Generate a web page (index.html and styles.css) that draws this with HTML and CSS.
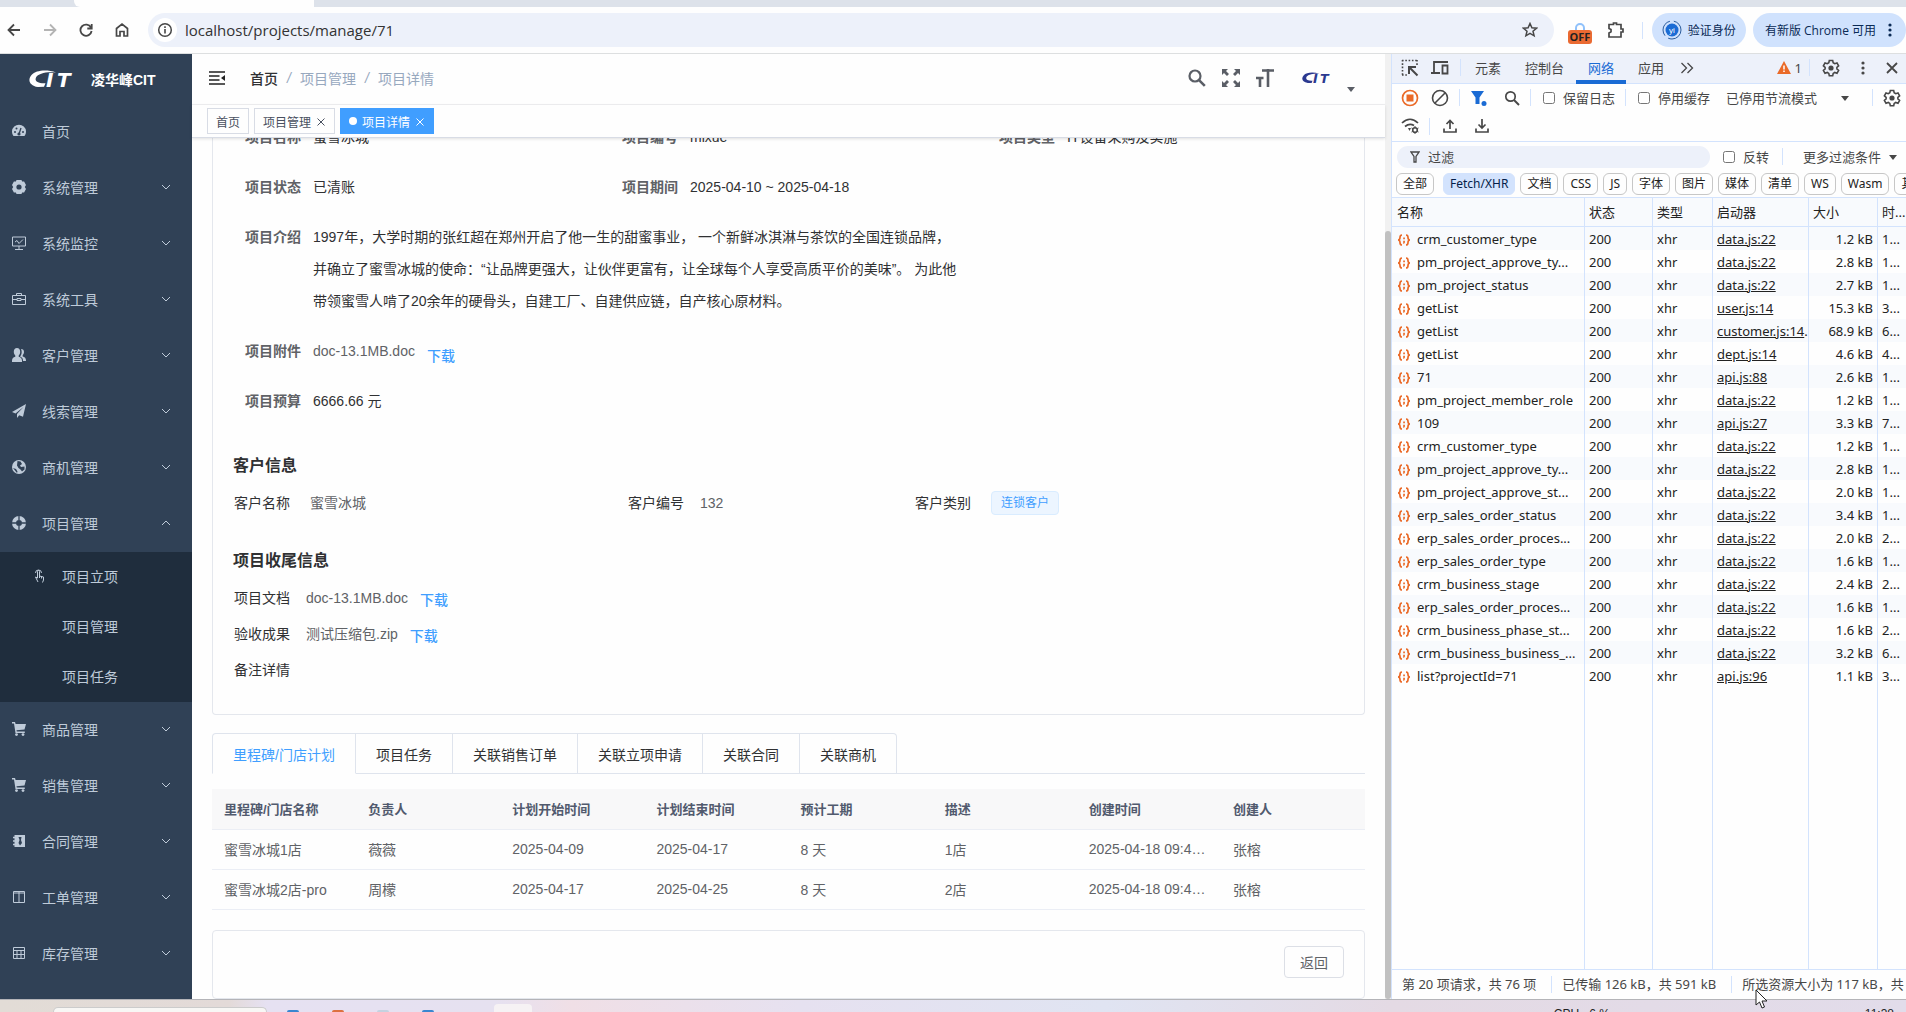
FILE: index.html
```html
<!DOCTYPE html>
<html lang="zh-CN">
<head>
    <meta charset="UTF-8">
    <meta name="viewport" content="width=device-width, initial-scale=1.0">
    <title>项目详情</title>
    <link rel="stylesheet" href="styles.css">
</head>
<body>
    <!-- 图标 -->
    <svg class="sprite" aria-hidden="true">
        <symbol id="i-down" viewBox="0 0 12 12"><path d="M2 4l4 4 4-4" fill="none" stroke="currentColor"/></symbol>
        <symbol id="i-up" viewBox="0 0 12 12"><path d="M2 8l4-4 4 4" fill="none" stroke="currentColor"/></symbol>
        <symbol id="i-close" viewBox="0 0 10 10"><path d="M1.500 1.500l7 7M8.500 1.500l-7 7" fill="none" stroke="currentColor"/></symbol>
        <symbol id="i-caret" viewBox="0 0 10 6"><path d="M1 1h8L5 6z" fill="currentColor"/></symbol>
        <symbol id="i-dots" viewBox="0 0 16 16"><g fill="currentColor"><circle cx="8" cy="3" r="1.600"/><circle cx="8" cy="8" r="1.600"/><circle cx="8" cy="13" r="1.600"/></g></symbol>
        <symbol id="i-gear" viewBox="0 0 18 18"><path d="M7.300 1.500h3.400l.5 2.300 1.500.9 2.300-.8 1.600 2.900-1.700 1.500v1.600l1.700 1.500-1.600 2.900-2.300-.8-1.500.9-.5 2.300H7.300l-.5-2.300-1.500-.9-2.300.8-1.600-2.900 1.700-1.500V8.300L1.400 6.800 3 3.900l2.300.8 1.500-.9z" fill="none" stroke="currentColor" stroke-width="1.600"/><circle cx="9" cy="9" r="2.600" fill="currentColor"/></symbol>
        <symbol id="i-search" viewBox="0 0 18 18"><circle cx="7" cy="7" r="5.500" fill="none" stroke="currentColor" stroke-width="2.200"/><path d="M10.800 10.800l6 6" stroke="currentColor" stroke-width="2.600"/></symbol>
        <symbol id="i-cart" viewBox="0 0 14 14"><path d="M0 0h3l.6 2H14l-1.500 5.500-8 .8.300 1.200h8V11H3.500L2 1.500H0z" fill="currentColor"/><circle cx="4.500" cy="12.600" r="1.400" fill="currentColor"/><circle cx="11" cy="12.600" r="1.400" fill="currentColor"/></symbol>
        <symbol id="i-json" viewBox="0 0 14 14"><path d="M5 2C3.200 2 3 3 3 4.500S2.500 7 1 7c1.500 0 2 1 2 2.500S3.200 12 5 12M9 2c1.800 0 2 1 2 2.500S11.500 7 13 7c-1.500 0-2 1-2 2.500S10.800 12 9 12" fill="none" stroke="#ea6a28" stroke-width="1.700"/><path d="M6.200 4.500h1.700v1.700H6.200zM6.200 7.800h1.700v1.700l-.8 1.300h-.9z" fill="#ea6a28"/></symbol>
        <symbol id="i-logo" viewBox="0 0 50 18"><path d="M27 2.500C18-.8 7 0 2.500 5-1.500 9.500 0 15.500 9 17l6-.2 1.500-3.600C8 13.500 5.500 11 7 7.500 9 3.500 17 1.500 27 2.500z" fill="currentColor"/><text x="17" y="17" font-family="DejaVu Sans" font-size="20" font-weight="bold" font-style="italic" fill="currentColor">I</text><text x="28" y="17" font-family="DejaVu Sans" font-size="20" font-weight="bold" font-style="italic" fill="currentColor">T</text></symbol>
    </svg>

    <!-- 浏览器 -->
    <div class="tabstrip"><div class="tabstrip-active"></div></div>
    <div class="toolbar">
        <button class="icon-btn" aria-label="后退"><svg width="14" height="14" viewBox="0 0 14 14"><path d="M13 7H2M7 1.500L1.500 7 7 12.500" fill="none" stroke="#474747" stroke-width="1.800"/></svg></button>
        <button class="icon-btn" aria-label="前进"><svg width="14" height="14" viewBox="0 0 14 14"><path d="M1 7h11M7 1.500L12.500 7 7 12.500" fill="none" stroke="#b4b4b4" stroke-width="1.800"/></svg></button>
        <button class="icon-btn" aria-label="刷新"><svg width="14" height="14" viewBox="0 0 14 14"><path d="M12 4.500A5.600 5.600 0 1 0 12.600 8M12.700 1v4.500H8.300" fill="none" stroke="#474747" stroke-width="1.800"/></svg></button>
        <button class="icon-btn" aria-label="主页"><svg width="14" height="14" viewBox="0 0 14 14"><path d="M1.500 13V5.500L7 1.200l5.500 4.300V13H9V8.500H5V13z" fill="none" stroke="#474747" stroke-width="1.700"/></svg></button>
        <div class="omnibox">
            <span class="site-info"><svg width="16" height="16" viewBox="0 0 16 16"><circle cx="8" cy="8" r="6.300" fill="none" stroke="#474747" stroke-width="1.500"/><path d="M8 7v4.500M8 4.300v1.700" stroke="#474747" stroke-width="1.600"/></svg></span>
            <input type="text" class="url" value="localhost/projects/manage/71" aria-label="地址">
            <svg width="16" height="16" viewBox="0 0 16 16"><path d="M8 1.500l1.900 4.300 4.700.4-3.600 3 1.100 4.600L8 11.400l-4.100 2.400L5 9.200l-3.600-3 4.700-.4z" fill="none" stroke="#474747" stroke-width="1.500"/></svg>
        </div>
        <div class="extensions">
            <span class="ext-off"><svg width="12" height="8" viewBox="0 0 12 8"><path d="M2 8V6a4 4 0 0 1 8 0v2" fill="none" stroke="#8fc1fb" stroke-width="2"/></svg><b>OFF</b></span>
            <svg width="18" height="18" viewBox="0 0 18 18"><path d="M2 3.500h4.500V2h3v1.500H14V8h2v3h-2v5H2v-4l2-1.200V8.500L2 7.500z" fill="none" stroke="#474747" stroke-width="1.700"/></svg>
        </div>
        <span class="bar-line"></span>
        <button class="pill"><svg width="20" height="20" viewBox="0 0 20 20"><circle cx="10" cy="10" r="9" fill="none" stroke="#2a5c9c" stroke-dasharray="18 4"/><circle cx="10" cy="10" r="6.500" fill="#1a6bd4"/><text x="10" y="13" text-anchor="middle" font-family="Liberation Sans" font-size="8" fill="#fff">yi</text></svg>验证身份</button>
        <button class="pill pill-update">有新版 Chrome 可用<svg width="16" height="16"><use href="#i-dots"/></svg></button>
    </div>

    <div class="window">
        <!-- 侧边栏 -->
        <nav class="sidebar">
            <a class="brand" href="#"><svg width="50" height="18"><use href="#i-logo"/></svg><span>凌华峰CIT</span></a>
            <a class="menu-item" href="#"><svg width="14" height="14" viewBox="0 0 14 14"><path d="M1.500 12A7 7 0 1 1 12.500 12z" fill="#bfcbd9"/><path d="M7 10l2-6" stroke="#304156" stroke-width="1.300"/><circle cx="7" cy="10" r="1.600" fill="#304156"/><circle cx="3" cy="8" r="1" fill="#304156"/><circle cx="4.500" cy="4.500" r="1" fill="#304156"/><circle cx="11" cy="8" r="1" fill="#304156"/></svg><span>首页</span></a>
            <a class="menu-item" href="#"><svg width="14" height="14" viewBox="0 0 14 14"><path d="M4.500 0h5l.6 1.600 2-.2L14 5l-1.200 2L14 9l-1.900 3.600-2-.2L9.500 14h-5l-.6-1.600-2 .2L0 9l1.200-2L0 5l1.900-3.600 2 .2z" fill="#bfcbd9"/><circle cx="7" cy="7" r="2.600" fill="#304156"/></svg><span>系统管理</span><svg class="arrow"><use href="#i-down"/></svg></a>
            <a class="menu-item" href="#"><svg width="14" height="14" viewBox="0 0 14 14"><path d="M.5 1h13v9H.5zM7 10v3M3 13.500h8M3 6l2-1.500L7 7.500l4-4" fill="none" stroke="#bfcbd9"/></svg><span>系统监控</span><svg class="arrow"><use href="#i-down"/></svg></a>
            <a class="menu-item" href="#"><svg width="14" height="14" viewBox="0 0 14 14"><path d="M.5 3.500h13v9H.5zM4.500 3.500v-2h5v2M.5 7.500H5M9 7.500h4.500M5 6.500h4v2H5z" fill="none" stroke="#bfcbd9"/></svg><span>系统工具</span><svg class="arrow"><use href="#i-down"/></svg></a>
            <a class="menu-item" href="#"><svg width="14" height="14" viewBox="0 0 14 14"><path d="M5 0c2 0 3.200 1.500 3.200 3.700 0 1.600-.7 3-1.500 3.800v1.200c2 .8 3.300 1.500 3.300 4V14H0v-1.300c0-2.500 1.300-3.200 3.300-4V7.500C2.500 6.700 1.800 5.300 1.800 3.700 1.800 1.500 3 0 5 0z" fill="#bfcbd9"/><path d="M9 1c2 0 3 1.200 3 3.100 0 1.400-.6 2.500-1.300 3.200v1.200c2 .7 3.300 1.500 3.300 4v.5h-3c0-2.500-1-3.800-3-4.500 1.300-1.500 2.500-4 1-7.500z" fill="#bfcbd9"/></svg><span>客户管理</span><svg class="arrow"><use href="#i-down"/></svg></a>
            <a class="menu-item" href="#"><svg width="14" height="14" viewBox="0 0 14 14"><path d="M14 0L0 8l3.500 1.500L11.500 3 5 10v4l2.200-2.800 3.800 1.600z" fill="#bfcbd9"/></svg><span>线索管理</span><svg class="arrow"><use href="#i-down"/></svg></a>
            <a class="menu-item" href="#"><svg width="14" height="14" viewBox="0 0 14 14"><circle cx="7" cy="7" r="7" fill="#bfcbd9"/><path d="M5.500 1l3 .5L10 4 8 5.500 9 7l3.500-.5v3L10 11.500l-1.500-2L6.500 8 5 5.500zM1 8l3 1 1.500 2.500L5 13z" fill="#304156"/></svg><span>商机管理</span><svg class="arrow"><use href="#i-down"/></svg></a>
            <a class="menu-item" href="#"><svg width="14" height="14" viewBox="0 0 14 14"><circle cx="7" cy="7" r="5" fill="none" stroke="#bfcbd9" stroke-width="4"/><path d="M7 0v4M7 10v4M0 7h4M10 7h4" stroke="#304156" stroke-width="1.300"/></svg><span>项目管理</span><svg class="arrow"><use href="#i-up"/></svg></a>
            <div class="submenu">
                <a class="submenu-item" href="#"><svg width="10" height="14" viewBox="0 0 10 14"><path d="M3.500 9V2.500a1 1 0 0 1 2 0V7l4 1v3l-1 2.500M3.500 9L1.500 8l2.500 5M1.500 4a3 3 0 1 1 6 0M5.500 7v2M7.500 7.500v2" fill="none" stroke="#bfcbd9"/></svg><span>项目立项</span></a>
                <a class="submenu-item" href="#"><i></i><span>项目管理</span></a>
                <a class="submenu-item" href="#"><i></i><span>项目任务</span></a>
            </div>
            <a class="menu-item" href="#"><svg width="14" height="14"><use href="#i-cart"/></svg><span>商品管理</span><svg class="arrow"><use href="#i-down"/></svg></a>
            <a class="menu-item" href="#"><svg width="14" height="14"><use href="#i-cart"/></svg><span>销售管理</span><svg class="arrow"><use href="#i-down"/></svg></a>
            <a class="menu-item" href="#"><svg width="14" height="14" viewBox="0 0 14 14"><path d="M2.500 1H13v12H2.500z" fill="#bfcbd9"/><path d="M1 3.500h3M1 7h3M1 10.500h3" stroke="#bfcbd9" stroke-width="1.500"/><path d="M6.500 3h3L9 6l1 3-2 2.500L6.500 9l1-3z" fill="#304156"/></svg><span>合同管理</span><svg class="arrow"><use href="#i-down"/></svg></a>
            <a class="menu-item" href="#"><svg width="14" height="14" viewBox="0 0 14 14"><path d="M1.500 1.500h11v11h-11zM7 1.500v11M1.500 3h11" fill="none" stroke="#bfcbd9"/></svg><span>工单管理</span><svg class="arrow"><use href="#i-down"/></svg></a>
            <a class="menu-item" href="#"><svg width="14" height="14" viewBox="0 0 14 14"><path d="M1.500 1.500h11v11h-11zM1.500 4.500h11M1.500 8.500h11M5 4.500v8M9 4.500v8" fill="none" stroke="#bfcbd9"/></svg><span>库存管理</span><svg class="arrow"><use href="#i-down"/></svg></a>
        </nav>

        <!-- 主区域 -->
        <main class="main">
            <header class="navbar">
                <button class="icon-btn" aria-label="折叠菜单"><svg width="16" height="14" viewBox="0 0 16 14"><path d="M0 1h16M0 5h10.500M0 9h10.500M0 13h16" stroke="#222" stroke-width="1.600"/><path d="M16 4v6l-4-3z" fill="#222"/></svg></button>
                <div class="breadcrumb"><a href="#">首页</a><i>/</i><span>项目管理</span><i>/</i><span>项目详情</span></div>
                <div class="nav-right">
                    <button class="icon-btn" aria-label="搜索"><svg width="18" height="18"><use href="#i-search"/></svg></button>
                    <button class="icon-btn" aria-label="全屏"><svg width="18" height="18" viewBox="0 0 18 18"><path d="M0 0h6L4 2l3 3-2 2-3-3-2 2zM18 0v6l-2-2-3 3-2-2 3-3-2-2zM0 18v-6l2 2 3-3 2 2-3 3 2 2zM18 18h-6l2-2-3-3 2-2 3 3 2-2z" fill="#5a5e66"/></svg></button>
                    <button class="icon-btn" aria-label="字号"><svg width="18" height="18" viewBox="0 0 18 18"><path d="M6 1.500h12M12 0v18M0 9h7.500M4 8v10" fill="none" stroke="#5a5e66" stroke-width="2.600"/></svg></button>
                    <a class="avatar" href="#"><svg width="32" height="14"><use href="#i-logo"/></svg><svg class="avatar-caret" width="10" height="6"><use href="#i-caret"/></svg></a>
                </div>
            </header>
            <div class="tags">
                <a class="tag-view" href="#">首页</a>
                <a class="tag-view" href="#">项目管理<svg width="10" height="10"><use href="#i-close"/></svg></a>
                <a class="tag-view active" href="#">项目详情<svg width="10" height="10"><use href="#i-close"/></svg></a>
            </div>
            <div class="page">
                <section class="card detail">
                    <div class="form-row">
                        <div class="form-item"><label>项目名称</label><span>蜜雪冰城</span></div>
                        <div class="form-item"><label>项目编号</label><span>mixue</span></div>
                        <div class="form-item"><label>项目类型</label><span>IT设备采购及实施</span></div>
                    </div>
                    <div class="form-row">
                        <div class="form-item"><label>项目状态</label><span>已清账</span></div>
                        <div class="form-item"><label>项目期间</label><span>2025-04-10 ~ 2025-04-18</span></div>
                    </div>
                    <div class="form-item intro"><label>项目介绍</label><p>1997年，大学时期的张红超在郑州开启了他一生的甜蜜事业， 一个新鲜冰淇淋与茶饮的全国连锁品牌，<br>并确立了蜜雪冰城的使命：“让品牌更强大，让伙伴更富有，让全球每个人享受高质平价的美味”。 为此他<br>带领蜜雪人啃了20余年的硬骨头，自建工厂、自建供应链，自产核心原材料。</p></div>
                    <div class="form-item"><label>项目附件</label><span class="muted">doc-13.1MB.doc</span><a class="download low" href="#">下载</a></div>
                    <div class="form-item"><label>项目预算</label><span>6666.66 元</span></div>

                    <h3>客户信息</h3>
                    <div class="customer">
                        <div class="info"><span>客户名称</span><em class="wide">蜜雪冰城</em></div>
                        <div class="info"><span>客户编号</span><em>132</em></div>
                        <div class="info"><span>客户类别</span><em class="wide badge">连锁客户</em></div>
                    </div>
                    <h3>项目收尾信息</h3>
                    <div class="info"><span>项目文档</span><em>doc-13.1MB.doc</em><a class="download" href="#">下载</a></div>
                    <div class="info"><span>验收成果</span><em>测试压缩包.zip</em><a class="download" href="#">下载</a></div>
                    <div class="info"><span>备注详情</span></div>
                </section>

                <div class="tabs">
                    <button class="tab active">里程碑/门店计划</button>
                    <button class="tab">项目任务</button>
                    <button class="tab">关联销售订单</button>
                    <button class="tab">关联立项申请</button>
                    <button class="tab">关联合同</button>
                    <button class="tab">关联商机</button>
                </div>
                <table class="plan">
                    <thead>
                        <tr><th>里程碑/门店名称</th><th>负责人</th><th>计划开始时间</th><th>计划结束时间</th><th>预计工期</th><th>描述</th><th>创建时间</th><th>创建人</th></tr>
                    </thead>
                    <tbody>
                        <tr><td>蜜雪冰城1店</td><td>薇薇</td><td>2025-04-09</td><td>2025-04-17</td><td>8 天</td><td>1店</td><td>2025-04-18 09:4…</td><td>张榕</td></tr>
                        <tr><td>蜜雪冰城2店-pro</td><td>周檬</td><td>2025-04-17</td><td>2025-04-25</td><td>8 天</td><td>2店</td><td>2025-04-18 09:4…</td><td>张榕</td></tr>
                    </tbody>
                </table>
                <section class="card actions"><button class="back">返回</button></section>
            </div>
        </main>
        <div class="scrollbar"><div class="thumb"></div></div>

        <!-- 开发者工具 -->
        <aside class="devtools">
            <div class="dt-tabs">
                <svg class="dt-icon" width="18" height="18" viewBox="0 0 18 18"><path d="M1 1.500h15M1.500 1v15M16 1v5M1 16h5" fill="none" stroke="#474747" stroke-width="1.600" stroke-dasharray="1.600 1.700"/><path d="M8 15V8h7M8.500 8.500l8 8" fill="none" stroke="#474747" stroke-width="2"/></svg>
                <svg class="dt-icon" width="18" height="18" viewBox="0 0 18 18"><path d="M3 14V3h14M0 14h9" fill="none" stroke="#474747" stroke-width="1.800"/><path d="M11.500 6.500h5v8h-5z" fill="none" stroke="#474747" stroke-width="1.800"/></svg>
                <span class="bar-line"></span>
                <button class="dt-tab">元素</button>
                <button class="dt-tab">控制台</button>
                <button class="dt-tab active">网络</button>
                <button class="dt-tab">应用</button>
                <svg class="more" width="14" height="12" viewBox="0 0 14 12"><path d="M1.500 1l5 5-5 5M7.500 1l5 5-5 5" fill="none" stroke="#474747" stroke-width="1.300"/></svg>
                <span class="warn"><svg width="14" height="13" viewBox="0 0 14 13"><path d="M7 0l7 13H0z" fill="#ea6a28"/><path d="M7 4.500v4M7 9.500V11" stroke="#fff" stroke-width="1.500"/></svg>1</span>
                <span class="bar-line"></span>
                <button class="icon-btn" aria-label="设置"><svg width="18" height="18"><use href="#i-gear"/></svg></button>
                <button class="icon-btn" aria-label="更多"><svg width="16" height="16"><use href="#i-dots"/></svg></button>
                <button class="icon-btn" aria-label="关闭"><svg width="12" height="12" viewBox="0 0 12 12"><path d="M1 1l10 10M11 1L1 11" stroke="#474747" stroke-width="1.800"/></svg></button>
            </div>
            <div class="dt-row dt-controls">
                <button class="icon-btn" aria-label="停止录制"><svg width="18" height="18" viewBox="0 0 18 18"><circle cx="9" cy="9" r="7.500" fill="none" stroke="#ea6a28" stroke-width="1.700"/><path d="M5.500 5.500h7v7h-7z" fill="#ea6a28"/></svg></button>
                <button class="icon-btn" aria-label="清除"><svg width="18" height="18" viewBox="0 0 18 18"><circle cx="9" cy="9" r="7.500" fill="none" stroke="#474747" stroke-width="1.600"/><path d="M14 4L4 14" stroke="#474747" stroke-width="1.600"/></svg></button>
                <span class="bar-line"></span>
                <button class="icon-btn" aria-label="过滤"><svg width="18" height="18" viewBox="0 0 18 18"><path d="M1 2h13L9.500 8.500V15h-4V8.500z" fill="#1a6bd4"/><circle cx="14" cy="14.500" r="2.500" fill="#1a6bd4"/></svg></button>
                <button class="icon-btn" aria-label="搜索"><svg width="16" height="16" viewBox="0 0 16 16"><circle cx="6.500" cy="6.500" r="4.700" fill="none" stroke="#474747" stroke-width="1.700"/><path d="M10 10l5 5" stroke="#474747" stroke-width="2"/></svg></button>
                <span class="bar-line"></span>
                <label><input type="checkbox">保留日志</label>
                <span class="bar-line"></span>
                <label><input type="checkbox">停用缓存</label>
                <select aria-label="节流"><option>已停用节流模式</option></select>
                <svg class="select-caret" width="10" height="6"><use href="#i-caret"/></svg>
                <span class="bar-line"></span>
                <button class="icon-btn" aria-label="网络设置"><svg width="18" height="18"><use href="#i-gear"/></svg></button>
            </div>
            <div class="dt-row dt-io">
                <svg width="18" height="16" viewBox="0 0 18 16"><path d="M1 5c5-5 11-5 16 0M4 8.500c3-2.500 6-3 9-1" fill="none" stroke="#474747" stroke-width="1.700"/><path d="M7 10h3l-1.500 3z" fill="#474747"/><circle cx="14" cy="12" r="2.300" fill="none" stroke="#474747" stroke-width="1.600"/><path d="M14 8v1.500M14 14.500V16M10.500 10l1.300.8M16.200 13.200l1.300.8M10.500 14l1.300-.8M16.200 10.800l1.300-.8" stroke="#474747"/></svg>
                <span class="bar-line"></span>
                <svg width="14" height="14" viewBox="0 0 14 14"><path d="M7 10V1.500M3.500 5L7 1.500 10.500 5M1 9.500V13h12V9.500" fill="none" stroke="#474747" stroke-width="1.700"/></svg>
                <svg width="14" height="14" viewBox="0 0 14 14"><path d="M7 0v8.500M3.500 5.500L7 9l3.500-3.500M1 9.500V13h12V9.500" fill="none" stroke="#474747" stroke-width="1.700"/></svg>
            </div>
            <div class="dt-row dt-filter">
                <div class="filter-box"><svg width="10" height="12" viewBox="0 0 10 12"><path d="M1 1h8L6 5.500V11H4V5.500z" fill="none" stroke="#474747" stroke-width="1.300"/></svg><input type="text" placeholder="过滤" aria-label="过滤"></div>
                <label><input type="checkbox">反转</label>
                <span class="bar-line"></span>
                <button class="more-filters">更多过滤条件<svg width="10" height="6"><use href="#i-caret"/></svg></button>
            </div>
            <div class="chips">
                <button class="chip first">全部</button><button class="chip on">Fetch/XHR</button><button class="chip">文档</button><button class="chip">CSS</button><button class="chip">JS</button><button class="chip">字体</button><button class="chip">图片</button><button class="chip">媒体</button><button class="chip">清单</button><button class="chip">WS</button><button class="chip">Wasm</button><button class="chip">其他</button>
            </div>
            <div class="requests">
                <table>
                    <colgroup><col class="c-name"><col class="c-status"><col class="c-type"><col class="c-init"><col class="c-size"><col></colgroup>
                    <thead><tr><th>名称</th><th>状态</th><th>类型</th><th>启动器</th><th>大小</th><th>时...</th></tr></thead>
                    <tbody>
                        <tr><td><svg><use href="#i-json"/></svg>crm_customer_type</td><td>200</td><td>xhr</td><td><a href="#">data.js:22</a></td><td>1.2 kB</td><td>1...</td></tr>
                        <tr><td><svg><use href="#i-json"/></svg>pm_project_approve_ty...</td><td>200</td><td>xhr</td><td><a href="#">data.js:22</a></td><td>2.8 kB</td><td>1...</td></tr>
                        <tr><td><svg><use href="#i-json"/></svg>pm_project_status</td><td>200</td><td>xhr</td><td><a href="#">data.js:22</a></td><td>2.7 kB</td><td>1...</td></tr>
                        <tr><td><svg><use href="#i-json"/></svg>getList</td><td>200</td><td>xhr</td><td><a href="#">user.js:14</a></td><td>15.3 kB</td><td>3...</td></tr>
                        <tr><td><svg><use href="#i-json"/></svg>getList</td><td>200</td><td>xhr</td><td><a href="#">customer.js:14</a>.</td><td>68.9 kB</td><td>6...</td></tr>
                        <tr><td><svg><use href="#i-json"/></svg>getList</td><td>200</td><td>xhr</td><td><a href="#">dept.js:14</a></td><td>4.6 kB</td><td>4...</td></tr>
                        <tr><td><svg><use href="#i-json"/></svg>71</td><td>200</td><td>xhr</td><td><a href="#">api.js:88</a></td><td>2.6 kB</td><td>1...</td></tr>
                        <tr><td><svg><use href="#i-json"/></svg>pm_project_member_role</td><td>200</td><td>xhr</td><td><a href="#">data.js:22</a></td><td>1.2 kB</td><td>1...</td></tr>
                        <tr><td><svg><use href="#i-json"/></svg>109</td><td>200</td><td>xhr</td><td><a href="#">api.js:27</a></td><td>3.3 kB</td><td>7...</td></tr>
                        <tr><td><svg><use href="#i-json"/></svg>crm_customer_type</td><td>200</td><td>xhr</td><td><a href="#">data.js:22</a></td><td>1.2 kB</td><td>1...</td></tr>
                        <tr><td><svg><use href="#i-json"/></svg>pm_project_approve_ty...</td><td>200</td><td>xhr</td><td><a href="#">data.js:22</a></td><td>2.8 kB</td><td>1...</td></tr>
                        <tr><td><svg><use href="#i-json"/></svg>pm_project_approve_st...</td><td>200</td><td>xhr</td><td><a href="#">data.js:22</a></td><td>2.0 kB</td><td>1...</td></tr>
                        <tr><td><svg><use href="#i-json"/></svg>erp_sales_order_status</td><td>200</td><td>xhr</td><td><a href="#">data.js:22</a></td><td>3.4 kB</td><td>1...</td></tr>
                        <tr><td><svg><use href="#i-json"/></svg>erp_sales_order_proces...</td><td>200</td><td>xhr</td><td><a href="#">data.js:22</a></td><td>2.0 kB</td><td>2...</td></tr>
                        <tr><td><svg><use href="#i-json"/></svg>erp_sales_order_type</td><td>200</td><td>xhr</td><td><a href="#">data.js:22</a></td><td>1.6 kB</td><td>1...</td></tr>
                        <tr><td><svg><use href="#i-json"/></svg>crm_business_stage</td><td>200</td><td>xhr</td><td><a href="#">data.js:22</a></td><td>2.4 kB</td><td>2...</td></tr>
                        <tr><td><svg><use href="#i-json"/></svg>erp_sales_order_proces...</td><td>200</td><td>xhr</td><td><a href="#">data.js:22</a></td><td>1.6 kB</td><td>1...</td></tr>
                        <tr><td><svg><use href="#i-json"/></svg>crm_business_phase_st...</td><td>200</td><td>xhr</td><td><a href="#">data.js:22</a></td><td>1.6 kB</td><td>2...</td></tr>
                        <tr><td><svg><use href="#i-json"/></svg>crm_business_business_...</td><td>200</td><td>xhr</td><td><a href="#">data.js:22</a></td><td>3.2 kB</td><td>6...</td></tr>
                        <tr><td><svg><use href="#i-json"/></svg>list?projectId=71</td><td>200</td><td>xhr</td><td><a href="#">api.js:96</a></td><td>1.1 kB</td><td>3...</td></tr>
                        <tr class="filler"><td></td><td></td><td></td><td></td><td></td><td></td></tr>
                    </tbody>
                </table>
            </div>
            <div class="summary"><span>第 20 项请求，共 76 项</span><span>已传输 126 kB，共 591 kB</span><span>所选资源大小为 117 kB，共</span></div>
        </aside>
    </div>

    <!-- 任务栏 -->
    <footer class="taskbar">
        <div class="task-search"></div>
        <i class="app blue"></i><i class="app orange"></i><i class="app grey"></i><i class="app blue"></i>
        <div class="task-active"></div>
        <span class="cpu">CPU&nbsp;&nbsp; 6 %</span>
        <span class="clock">11:38</span>
    </footer>
    <svg class="cursor" width="13" height="20" viewBox="0 0 13 20"><path d="M1 1v15l3.500-3 2.500 6 2.500-1-2.500-6H12z" fill="#fff" stroke="#222"/></svg>
</body>
</html>
```

FILE: styles.css
```css
* {
    box-sizing: border-box;
}
body {
    margin: 0;
    height: 100vh;
    display: flex;
    flex-direction: column;
    overflow: hidden;
    position: relative;
    background-color: #fefefe;
    font-family: "Liberation Sans", "Noto Sans CJK SC", sans-serif;
    font-size: 14px;
    color: #303133;
}
a {
    color: inherit;
    text-decoration: none;
}
button, input, select {
    font: inherit;
    color: inherit;
}
button {
    border: none;
    background: none;
    padding: 0;
    cursor: pointer;
}
svg {
    flex: none;
}
.sprite {
    position: absolute;
    width: 0;
    height: 0;
}
.icon-btn {
    display: flex;
}
.bar-line {
    flex: none;
    width: 1px;
    height: 17px;
    background-color: #d3e3fd;
}

/* browser */
.tabstrip {
    flex: none;
    height: 7px;
    padding-left: 74px;
    background-color: #dde2ea;
}
.tabstrip-active {
    width: 240px;
    height: 7px;
    background-color: #fefefe;
    border-radius: 0 0 0 6px;
}
.toolbar {
    flex: none;
    display: flex;
    align-items: center;
    height: 47px;
    padding-left: 7px;
    gap: 22px;
    border-bottom: 1px solid #dddfe0;
    font-family: "Open Sans", "Noto Sans CJK SC", sans-serif;
}
.omnibox {
    flex: 1;
    display: flex;
    align-items: center;
    gap: 8px;
    height: 34px;
    margin-left: -3px;
    padding: 0 16px 0 5px;
    border-radius: 17px;
    background-color: #edf1fa;
}
.site-info {
    display: flex;
    padding: 4px;
    border-radius: 12px;
    background-color: #fff;
}
.url {
    flex: 1;
    border: none;
    outline: none;
    padding: 0;
    background: none;
    font-size: 15px;
    color: #333;
}
.extensions {
    display: flex;
    align-items: center;
    gap: 15px;
    margin-left: -8px;
}
.ext-off {
    display: flex;
    flex-direction: column;
    align-items: center;
    padding-top: 6px;
}
.ext-off b {
    width: 24px;
    border-radius: 3px;
    background-color: #ea6a32;
    font-size: 11px;
    line-height: 14px;
    text-align: center;
    color: #222;
}
.toolbar > .bar-line {
    margin: 0 -13px 0 -5px;
}
.pill {
    display: flex;
    align-items: center;
    gap: 6px;
    height: 34px;
    padding: 0 10px;
    border-radius: 17px;
    background-color: #d0e2fd;
    font-size: 12px;
    color: #0a2a55;
}
.pill-update {
    margin-left: -15px;
    padding: 0 8px 0 12px;
    gap: 6px;
}

.window {
    flex: 1;
    display: flex;
    min-height: 0;
    border-bottom: 1px solid #b4b4b8;
}

/* sidebar */
.sidebar {
    flex: 0 0 192px;
    overflow: hidden;
    background-color: #304156;
    color: #bfcbd9;
}
.brand {
    display: flex;
    align-items: center;
    gap: 12px;
    height: 50px;
    padding-left: 29px;
    font-weight: bold;
    color: #fff;
}
.menu-item {
    display: flex;
    align-items: center;
    gap: 16px;
    height: 56px;
    padding: 0 20px 2px 12px;
}
.arrow {
    width: 12px;
    height: 12px;
    margin-left: auto;
}
.submenu {
    background-color: #1f2d3d;
}
.submenu-item {
    display: flex;
    align-items: center;
    gap: 18px;
    height: 50px;
    padding: 0 0 2px 34px;
}
.submenu-item i {
    width: 10px;
}

/* header */
.main {
    flex: 1;
    min-width: 0;
    display: flex;
    flex-direction: column;
}
.navbar {
    flex: none;
    display: flex;
    align-items: center;
    height: 51px;
    padding: 0 29px 2px 17px;
    border-bottom: 1px solid #f0f0f2;
}
.breadcrumb {
    display: flex;
    align-items: center;
    margin-left: 25px;
    color: #97a8be;
}
.breadcrumb a {
    color: #303133;
    font-weight: 500;
}
.breadcrumb i {
    width: 22px;
    text-align: center;
    color: #97a8be;
}
.nav-right {
    display: flex;
    align-items: center;
    gap: 16px;
    margin-left: auto;
    color: #5a5e66;
}
.avatar {
    display: flex;
    align-items: center;
    gap: 12px;
    margin-left: 12px;
    color: #2b3990;
}
.avatar-caret {
    margin-top: 22px;
    color: #5a5e66;
}
.tags {
    flex: none;
    position: relative;
    display: flex;
    gap: 5px;
    height: 33px;
    padding: 3px 15px;
    border-bottom: 1px solid #d8dce5;
    box-shadow: 0 1px 3px rgba(0, 0, 0, 0.12);
    background-color: #fefefe;
}
.tag-view {
    display: flex;
    align-items: center;
    gap: 5px;
    height: 26px;
    padding: 0 8px;
    border: 1px solid #d8dce5;
    font-size: 12px;
    color: #495060;
}
.tag-view svg {
    margin-top: 2px;
}
.tag-view.active {
    border-color: #409eff;
    background-color: #409eff;
    color: #fff;
}
.tag-view.active::before {
    content: "";
    width: 8px;
    height: 8px;
    border-radius: 50%;
    background-color: #fff;
}

/* page */
.page {
    flex: 1;
    min-height: 0;
    overflow: hidden;
    padding: 0 20px;
}
.card {
    border: 1px solid #e4e7ed;
    border-radius: 4px;
}
.detail {
    margin-top: -26px;
    padding: 0 20px 26px;
    border-top: none;
}
.form-row {
    display: grid;
    grid-template-columns: repeat(3, 1fr);
    gap: 20px;
    height: 50px;
}
.form-item {
    display: flex;
    height: 50px;
    line-height: 50px;
}
.form-item label {
    flex: none;
    width: 80px;
    padding-left: 12px;
    font-weight: bold;
    color: #606266;
}
.form-item.intro {
    height: 114px;
    line-height: 32px;
    padding-top: 9px;
}
.intro p {
    margin: 0;
    white-space: nowrap;
}
.muted {
    color: #606266;
}
.download {
    margin-left: 12px;
    padding-top: 2px;
    font-weight: 500;
    color: #409eff;
}
.download.low {
    padding-top: 5px;
}
h3 {
    margin: 28px 0 7px;
    font-size: 16px;
    line-height: 24px;
}
.customer {
    display: grid;
    grid-template-columns: 394fr 287fr 430fr;
    margin-bottom: 26px;
}
.info {
    display: flex;
    height: 36px;
    padding-left: 1px;
    line-height: 36px;
}
.info em {
    margin-left: 16px;
    font-style: normal;
    color: #606266;
}
.info em.wide {
    margin-left: 20px;
}
.info em.badge {
    align-self: center;
    height: 24px;
    padding: 0 9px;
    border: 1px solid #d9ecff;
    border-radius: 4px;
    background-color: #ecf5ff;
    font-size: 12px;
    line-height: 22px;
    color: #409eff;
}

.tabs {
    display: flex;
    margin-top: 18px;
    border-bottom: 1px solid #dfe4ed;
}
.tab {
    height: 41px;
    margin-bottom: -1px;
    padding: 0 20px;
    border: 1px solid #dfe4ed;
    border-left: none;
}
.tab:first-child {
    border-left: 1px solid #dfe4ed;
    border-radius: 4px 0 0 0;
}
.tab:last-child {
    border-radius: 0 4px 0 0;
}
.tab.active {
    border-bottom-color: #fefefe;
    color: #409eff;
}
.plan {
    width: 100%;
    margin-top: 15px;
    table-layout: fixed;
    border-collapse: collapse;
}
.plan th, .plan td {
    height: 40px;
    padding: 0 12px;
    border-bottom: 1px solid #ebeef5;
    text-align: left;
    white-space: nowrap;
    color: #606266;
}
.plan th {
    background-color: #f8f8f9;
    font-size: 13px;
    color: #515a6e;
}
.actions {
    display: flex;
    justify-content: flex-end;
    margin-top: 20px;
    padding: 15px 20px 20px;
}
.back {
    width: 60px;
    height: 32px;
    border: 1px solid #dcdfe6;
    border-radius: 4px;
    color: #606266;
}
.scrollbar {
    flex: 0 0 6px;
    padding-top: 177px;
    background-color: #f1f1f1;
}
.thumb {
    height: 100%;
    border-radius: 3px;
    background-color: #c1c1c1;
}

/* devtools */
.devtools {
    flex: 0 0 515px;
    min-width: 0;
    display: flex;
    flex-direction: column;
    overflow: hidden;
    border-left: 1px solid #d3e3fd;
    font-family: "Noto Sans", "Noto Sans CJK SC", sans-serif;
    font-size: 13px;
    color: #474747;
}
.dt-tabs {
    flex: none;
    display: flex;
    align-items: center;
    height: 30px;
    padding: 0 8px 2px 9px;
    border-bottom: 1px solid #d3e3fd;
    background-color: #edf1fa;
}
.dt-icon {
    margin-right: 12px;
}
.dt-tabs .bar-line {
    margin: 0 2px 0 -1px;
}
.dt-tab {
    height: 30px;
    margin-bottom: -2px;
    padding: 0 12px 2px;
    border-bottom: 4px solid transparent;
    border-top: 4px solid transparent;
}
.dt-tab.active {
    border-bottom-color: #1a6bd4;
    color: #1a6bd4;
}
.more {
    margin-left: 4px;
}
.warn {
    display: flex;
    align-items: center;
    gap: 4px;
    margin: 0 8px 0 auto;
}
.dt-tabs .icon-btn {
    margin-left: 10px;
}
.dt-tabs .icon-btn + .icon-btn {
    margin-left: 15px;
}
.dt-row {
    flex: none;
    display: flex;
    align-items: center;
    height: 29px;
    padding: 0 8px 2px 9px;
    white-space: nowrap;
}
.dt-row label {
    display: flex;
    align-items: center;
    gap: 8px;
}
.dt-row input[type="checkbox"] {
    width: 12px;
    height: 12px;
    margin: 0;
}
.dt-controls {
    gap: 10px;
    padding-right: 5px;
}
.dt-controls .icon-btn:nth-child(2) {
    margin-left: 2px;
}
.dt-controls .icon-btn:nth-child(5) {
    margin-left: 6px;
}
.dt-controls label {
    margin-left: 2px;
}
.dt-controls select {
    appearance: none;
    width: 104px;
    margin-left: 6px;
    padding: 0;
    border: none;
    background: none;
}
.dt-controls .select-caret {
    margin: 0 auto 0 0;
}
.dt-io {
    gap: 10px;
    border-bottom: 1px solid #d3e3fd;
}
.dt-io svg:nth-child(3) {
    margin: 0 8px 0 3px;
}
.dt-filter {
    padding: 0 8px 0 5px;
}
.filter-box {
    display: flex;
    align-items: center;
    gap: 8px;
    flex: 1;
    height: 22px;
    margin-right: 13px;
    padding: 0 13px;
    border-radius: 11px;
    background-color: #edf1fa;
}
.filter-box input {
    flex: 1;
    min-width: 0;
    border: none;
    outline: none;
    padding: 0;
    background: none;
}
.filter-box input::placeholder {
    color: #474747;
}
.dt-filter .bar-line {
    margin: 0 20px 0 13px;
}
.more-filters {
    display: flex;
    align-items: center;
    gap: 7px;
}
.chips {
    flex: none;
    display: flex;
    gap: 5px;
    height: 27px;
    padding: 2px 0 0 4px;
    border-bottom: 1px solid #d3e3fd;
}
.chip {
    flex: none;
    height: 22px;
    padding: 0 6px;
    border: 1px solid #c7c7c7;
    border-radius: 6px;
    font-size: 12px;
    line-height: 20px;
    color: #222;
}
.chip.first {
    margin-right: 4px;
}
.chip.on {
    border-color: #d3e3fd;
    background-color: #d3e3fd;
    color: #041e49;
}
.requests {
    flex: 1;
    min-height: 0;
    color: #222;
}
.requests table {
    width: 100%;
    height: 100%;
    table-layout: fixed;
    border-spacing: 0;
}
.c-name { width: 193px; }
.c-status { width: 68px; }
.c-type { width: 60px; }
.c-init { width: 96px; }
.c-size { width: 69px; }
.requests th, .requests td {
    height: 23px;
    padding: 0 4px;
    border-right: 1px solid #d3e3fd;
    line-height: 18px;
    text-align: left;
    font-weight: normal;
    white-space: nowrap;
}
.requests th {
    height: 29px;
    border-bottom: 1px solid #d3e3fd;
    background-color: #f8fafd;
}
.requests th:first-child, .requests td:first-child {
    padding-left: 5px;
}
.requests th:last-child, .requests td:last-child {
    border-right: none;
}
.requests tbody tr:nth-child(odd) {
    background-color: #f8fafd;
}
.requests td:nth-child(5) {
    text-align: right;
}
.requests td:nth-child(4) {
    padding-right: 0;
}
.requests td a {
    text-decoration: underline;
}
.requests svg {
    width: 14px;
    height: 14px;
    margin-right: 6px;
    vertical-align: -3px;
}
.requests tbody tr.filler {
    background-color: #fefefe;
}
.requests .filler td {
    height: auto;
}
.summary {
    flex: none;
    display: flex;
    align-items: center;
    height: 30px;
    border-top: 1px solid #d3e3fd;
    white-space: nowrap;
}
.summary span {
    padding: 0 15px 0 10px;
    line-height: 17px;
    border-left: 1px solid #d3e3fd;
}
.summary span:first-child {
    border-left: none;
}

/* taskbar */
.taskbar {
    flex: none;
    display: flex;
    align-items: flex-end;
    height: 12px;
    overflow: hidden;
    background-image: linear-gradient(90deg, #e2dcd6, #e3dad8 12%, #e6e1f2 14%, #e6e1f0 26%, #f0dfe6 30%, #e6e1f0 42%, #e0e4f2 58%, #e4dae4 73%, #e2dcea);
    font-size: 12px;
    line-height: 12px;
    color: #222;
}
.task-search {
    width: 214px;
    height: 5px;
    margin: 0 20px 0 53px;
    border: 1px solid #ccc;
    border-bottom: none;
    border-radius: 8px 8px 0 0;
    background-color: #f8f7f5;
}
.app {
    width: 12px;
    height: 2px;
    margin-right: 33px;
    border-radius: 6px 6px 0 0;
}
.app.blue { background-color: #3a86d0; }
.app.orange { background-color: #dd7040; }
.app.grey { background-color: #c4d2e0; }
.task-active {
    width: 38px;
    height: 8px;
    margin-left: 27px;
    border-radius: 4px 4px 0 0;
    background-color: #f6f2f4;
}
.cpu {
    margin: 0 255px -8px auto;
}
.clock {
    margin: 0 12px -8px 0;
}
.cursor {
    position: absolute;
    left: 1755px;
    top: 989px;
}
```
